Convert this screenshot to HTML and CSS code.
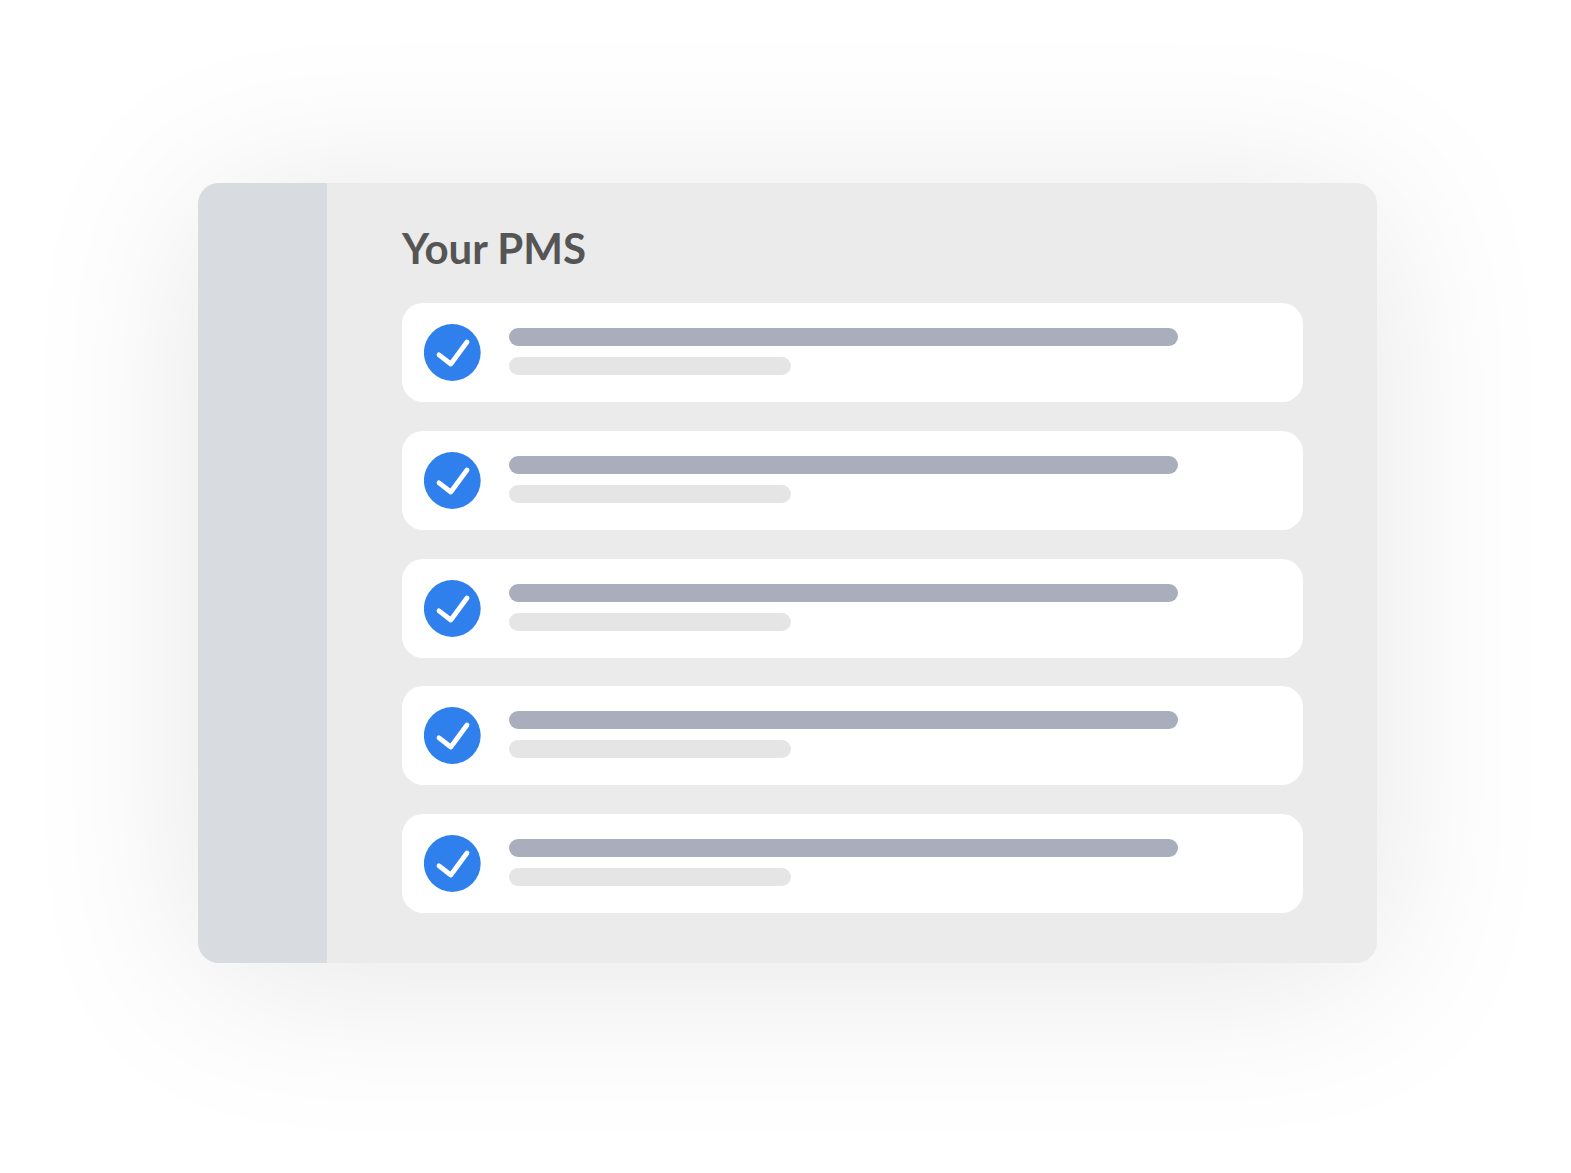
FILE: index.html
```html
<!DOCTYPE html>
<html lang="en">
<head>
<meta charset="utf-8">
<meta name="viewport" content="width=device-width, initial-scale=1">
<title>Your PMS</title>
<link rel="stylesheet" href="styles.css">
</head>
<body>
<svg width="0" height="0" class="symbols" aria-hidden="true">
  <symbol id="check" viewBox="0 0 57 57">
    <circle cx="28.3" cy="28.5" r="28.4" fill="#2f80ed"/>
    <path d="M15 30.8 26.8 40 43 18" fill="none" stroke="#fff" stroke-width="4.8" stroke-linecap="round" stroke-linejoin="round"/>
  </symbol>
</svg>
<div class="window">
  <aside class="sidebar"></aside>
  <main class="content">
    <h1 class="title">Your PMS</h1>
    <ul class="list">
      <li class="card"><svg class="check"><use href="#check"/></svg><div class="lines"><div class="line line-primary"></div><div class="line line-secondary"></div></div></li>
      <li class="card"><svg class="check"><use href="#check"/></svg><div class="lines"><div class="line line-primary"></div><div class="line line-secondary"></div></div></li>
      <li class="card"><svg class="check"><use href="#check"/></svg><div class="lines"><div class="line line-primary"></div><div class="line line-secondary"></div></div></li>
      <li class="card"><svg class="check"><use href="#check"/></svg><div class="lines"><div class="line line-primary"></div><div class="line line-secondary"></div></div></li>
      <li class="card"><svg class="check"><use href="#check"/></svg><div class="lines"><div class="line line-primary"></div><div class="line line-secondary"></div></div></li>
    </ul>
  </main>
</div>
</body>
</html>
```
FILE: styles.css
```css
* {
  box-sizing: border-box;
}

body {
  margin: 0;
  padding: 183px 194px 210px 198px;
  min-height: 100vh;
  display: flex;
  background: #fff;
  font-family: Lato, sans-serif;
}

.symbols {
  position: absolute;
}

.window {
  flex: 1;
  display: flex;
  border-radius: 21px;
  background: #ebebeb;
  box-shadow: 0 14px 180px rgba(0, 0, 0, 0.1);
}

.sidebar {
  width: 129px;
  border-radius: 21px 0 0 21px;
  background: #d8dbe0;
}

.content {
  flex: 1;
  display: flex;
  flex-direction: column;
  padding: 40px 74px 50px 75px;
}

.title {
  margin: 0 0 30px;
  font-size: 42px;
  line-height: 50px;
  font-weight: 700;
  color: #555;
}

.list {
  flex: 1;
  display: flex;
  flex-direction: column;
  justify-content: space-between;
  margin: 0;
  padding: 0;
  list-style: none;
}

.card {
  display: flex;
  align-items: flex-start;
  gap: 28px;
  min-height: 99px;
  padding: 21px 22px;
  border-radius: 21px;
  background: #fff;
}

.check {
  flex: none;
  width: 57px;
  height: 57px;
}

.lines {
  flex: 1;
  display: flex;
  flex-direction: column;
  gap: 11px;
  padding-top: 4px;
}

.line {
  height: 18px;
  border-radius: 9px;
}

.line-primary {
  width: 86.6%;
  background: #a8aebb;
}

.line-secondary {
  width: 36.5%;
  background: #e5e5e5;
}
```
